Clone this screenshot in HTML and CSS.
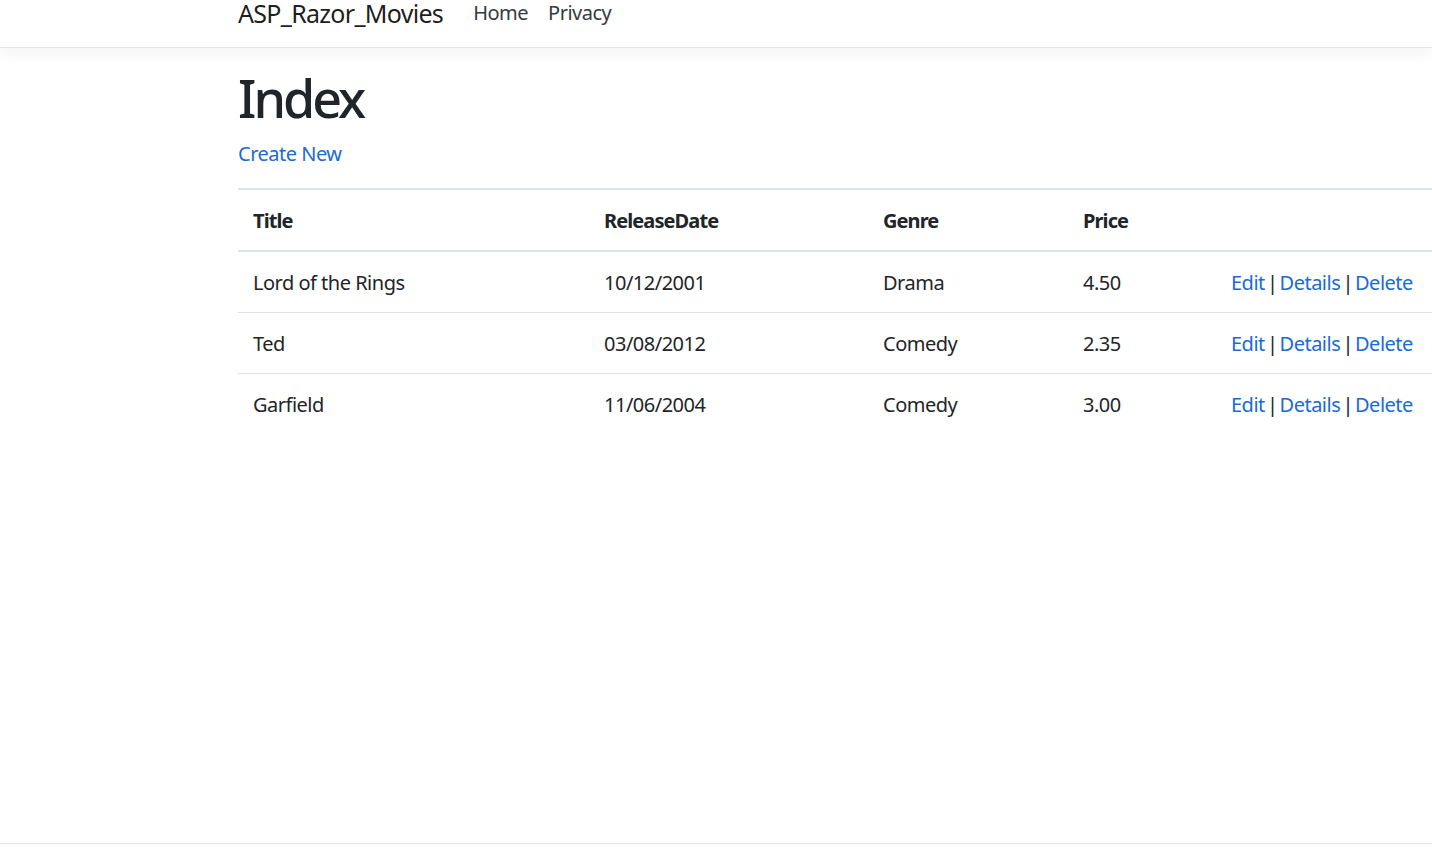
FILE: index.html
```html
<!DOCTYPE html>
<html lang="en">
<head>
<meta charset="utf-8">
<title>Index - ASP_Razor_Movies</title>
<link rel="stylesheet" href="styles.css">
</head>
<body>
<div class="page">
  <header class="navbar">
    <div class="nav-inner">
      <a class="brand" href="#">ASP_Razor_Movies</a>
      <a class="nav-link" href="#">Home</a>
      <a class="nav-link" href="#">Privacy</a>
    </div>
  </header>
  <main class="container">
    <h1 class="title">Index</h1>
    <p class="create"><a class="link" href="#">Create New</a></p>
    <table class="table">
      <colgroup>
        <col class="c-title">
        <col class="c-date">
        <col class="c-genre">
        <col class="c-price">
        <col class="c-actions">
      </colgroup>
      <thead>
        <tr>
          <th>Title</th>
          <th>ReleaseDate</th>
          <th>Genre</th>
          <th>Price</th>
          <th></th>
        </tr>
      </thead>
      <tbody>
        <tr>
          <td>Lord of the Rings</td>
          <td>10/12/2001</td>
          <td>Drama</td>
          <td>4.50</td>
          <td class="actions"><a class="link" href="#">Edit</a> | <a class="link" href="#">Details</a> | <a class="link" href="#">Delete</a></td>
        </tr>
        <tr>
          <td>Ted</td>
          <td>03/08/2012</td>
          <td>Comedy</td>
          <td>2.35</td>
          <td class="actions"><a class="link" href="#">Edit</a> | <a class="link" href="#">Details</a> | <a class="link" href="#">Delete</a></td>
        </tr>
        <tr>
          <td>Garfield</td>
          <td>11/06/2004</td>
          <td>Comedy</td>
          <td>3.00</td>
          <td class="actions"><a class="link" href="#">Edit</a> | <a class="link" href="#">Details</a> | <a class="link" href="#">Delete</a></td>
        </tr>
      </tbody>
    </table>
  </main>
  <footer class="footer"></footer>
</div>
</body>
</html>
```

FILE: styles.css
```css
html, body {
  margin: 0;
  padding: 0;
}

body {
  font-family: "Noto Sans", "Open Sans", sans-serif;
  color: #212529;
  background: #ffffff;
  font-size: 20px;
  line-height: 30px;
  letter-spacing: -0.5px;
}

.page {
  min-height: 100vh;
  display: flex;
  flex-direction: column;
  overflow: hidden;
}

.navbar {
  height: 47px;
  border-bottom: 1px solid #e5e5e5;
  box-shadow: 0 5px 15px rgba(0, 0, 0, 0.05);
  background: #fff;
  position: relative;
  z-index: 1;
}

.nav-inner {
  display: flex;
  align-items: flex-start;
  padding-left: 238px;
}

.brand {
  font-size: 25px;
  line-height: 27px;
  letter-spacing: -0.7px;
  color: rgba(0, 0, 0, 0.9);
  text-decoration: none;
  margin-right: 20px;
}

.nav-link {
  font-size: 20px;
  line-height: 26px;
  color: #343a40;
  text-decoration: none;
  padding: 0 10px;
}

.container {
  padding-left: 238px;
  padding-top: 18px;
}

.title {
  font-size: 52px;
  line-height: 64px;
  letter-spacing: -3px;
  font-weight: 500;
  margin: 0 0 9px 0;
  color: #212529;
}

.create {
  margin: 0 0 19px 0;
}

.link {
  color: #1a6ad8;
  text-decoration: none;
}

.table {
  width: 100%;
  border-collapse: collapse;
  table-layout: fixed;
  border-top: 2px solid #dee2e6;
}

.c-title { width: 351px; }
.c-date { width: 279px; }
.c-genre { width: 200px; }
.c-price { width: 148px; }
.c-actions { width: 216px; }

.table th,
.table td {
  padding: 15px;
  text-align: left;
  vertical-align: top;
  white-space: nowrap;
}

.table th {
  font-weight: 700;
  letter-spacing: -0.9px;
  border-bottom: 2px solid #dee2e6;
  padding-top: 16px;
  padding-bottom: 14px;
}

.table td {
  padding-top: 16px;
  padding-bottom: 14px;
}

.table .actions {
  word-spacing: -2.6px;
}

.table tbody tr + tr td {
  border-top: 1px solid #dee2e6;
}

.footer {
  margin-top: auto;
  height: 12px;
  border-top: 1px solid #e5e5e5;
}
```
